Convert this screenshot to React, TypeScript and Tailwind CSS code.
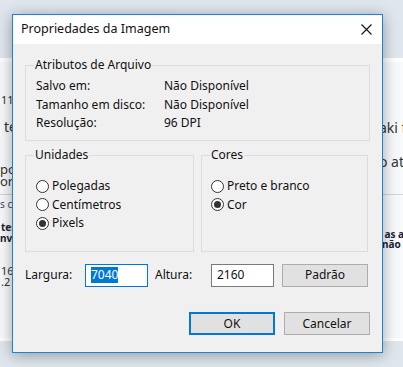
import React from "react";

const font = { fontFamily: '"Noto Sans", "Segoe UI", Arial, sans-serif' };

function Radio({ label, checked }: { label: string; checked?: boolean }) {
  return (
    <div className="flex h-[18.5px] items-center gap-[3px]">
      <span className="flex h-[13px] w-[13px] items-center justify-center rounded-full border border-[#333] bg-white">
        {checked && <span className="h-[7px] w-[7px] rounded-full bg-[#333]" />}
      </span>
      <span>{label}</span>
    </div>
  );
}

function Btn({ label, primary }: { label: string; primary?: boolean }) {
  return (
    <button
      className={
        "flex h-[23px] w-[86px] items-center justify-center bg-[#e1e1e1] text-[#111] " +
        (primary ? "border-2 border-[#0078d7]" : "border border-[#adadad]")
      }
    >
      {label}
    </button>
  );
}

export default function App() {
  return (
    <div
      className="relative h-[367px] w-[403px] overflow-hidden bg-[#dfe6ed] pt-[58px] text-[12px] text-black"
      style={font}
    >
      {/* background page */}
      <div className="flex h-[283px] justify-between border-t-[4px] border-b-[3px] border-white bg-[#f7f9fb]">
        <div className="flex w-[40px] flex-col text-[#333]">
          <div className="ml-[1px] mt-[32px] text-[11px] leading-[12px]">11</div>
          <div className="ml-[4px] mt-[13px] text-[14px] leading-[16px]">te</div>
          <div className="ml-[0px] mt-[28px] text-[13px] leading-[12px]">poo</div>
          <div className="ml-[0px] text-[13px] leading-[12px]">orr</div>
          <div className="mt-[7px] w-[403px] border-t border-[#cfd6dc]" />
          <div className="ml-[0px] mt-[3px] text-[10px] leading-[12px] text-[#446]">s ci</div>
          <div className="ml-[1px] mt-[12px] text-[10px] font-bold leading-[11px] text-[#223]">tes</div>
          <div className="ml-[0px] text-[10px] font-bold leading-[11px] text-[#223]">nvi</div>
          <div className="ml-[1px] mt-[21px] text-[11px] leading-[11px]">16</div>
          <div className="ml-[1px] text-[11px] leading-[11px]">.2</div>
        </div>
        <div className="flex w-[24px] flex-col text-[#333]">
          <div className="mt-[58px] whitespace-nowrap text-[14px] leading-[16px]">aki f</div>
          <div className="mt-[18px] whitespace-nowrap text-[14px] leading-[16px]">o ata</div>
          <div className="mt-[59px] whitespace-nowrap text-[10px] font-bold leading-[10px] text-[#223]">
            <span className="text-[#2a6cc0]">·</span> as a
          </div>
          <div className="ml-[3px] whitespace-nowrap text-[10px] font-bold leading-[10px] text-[#223]">não</div>
        </div>
      </div>

      {/* dialog window */}
      <div className="absolute left-[12px] top-[14px] flex h-[339px] w-[371px] flex-col border border-[#1883d7] bg-[#f0f0f0] shadow-[0_2px_14px_rgba(0,0,0,0.35)]">
        <div className="flex h-[29px] items-center justify-between bg-white pl-[8px] pr-[10px]">
          <span className="text-[12.5px] text-[#111]">Propriedades da Imagem</span>
          <svg width="11" height="11" viewBox="0 0 11 11">
            <path d="M0.5 0.5 L10.5 10.5 M10.5 0.5 L0.5 10.5" stroke="#111" strokeWidth="1.1" />
          </svg>
        </div>

        <div className="flex flex-col px-[12px] pt-[13px] text-[#111]">
          <fieldset className="h-[84px] border border-[#dcdcdc] px-[10px]">
            <legend className="ml-[-2px] px-[1px] leading-[16px]">Atributos de Arquivo</legend>
            <div className="mt-[4px] grid grid-cols-[128px_1fr]">
              <span className="leading-[18.5px]">Salvo em:</span>
              <span className="leading-[18.5px]">Não Disponível</span>
              <span className="leading-[18.5px]">Tamanho em disco:</span>
              <span className="leading-[18.5px]">Não Disponível</span>
              <span className="leading-[18.5px]">Resolução:</span>
              <span className="leading-[18.5px]">96 DPI</span>
            </div>
          </fieldset>

          <div className="mt-[6px] flex gap-[7px]">
            <fieldset className="h-[105px] w-[169px] border border-[#dcdcdc] px-[10px]">
              <legend className="ml-[-2px] px-[1px] leading-[16px]">Unidades</legend>
              <div className="mt-[14px] flex flex-col">
                <Radio label="Polegadas" />
                <Radio label="Centímetros" />
                <Radio label="Pixels" checked />
              </div>
            </fieldset>
            <fieldset className="h-[105px] w-[167px] border border-[#dcdcdc] px-[9px]">
              <legend className="ml-[-1px] px-[1px] leading-[16px]">Cores</legend>
              <div className="mt-[14px] flex flex-col">
                <Radio label="Preto e branco" />
                <Radio label="Cor" checked />
              </div>
            </fieldset>
          </div>

          <div className="mt-[11px] flex h-[24px] items-center">
            <span className="w-[60px]">Largura:</span>
            <div className="flex h-[23px] w-[63px] items-center border border-[#0078d7] bg-white px-[5px]">
              <span className="bg-[#0078d7] leading-[16px] text-white">7040</span>
            </div>
            <span className="ml-[7px] w-[56px]">Altura:</span>
            <div className="flex h-[23px] w-[63px] items-center border border-[#7a7a7a] bg-white px-[5px]">
              <span className="leading-[16px]">2160</span>
            </div>
            <div className="ml-[8px]">
              <Btn label="Padrão" />
            </div>
          </div>

          <div className="mt-[25px] flex justify-end gap-[9px]">
            <Btn label="OK" primary />
            <Btn label="Cancelar" />
          </div>
        </div>
      </div>
    </div>
  );
}
